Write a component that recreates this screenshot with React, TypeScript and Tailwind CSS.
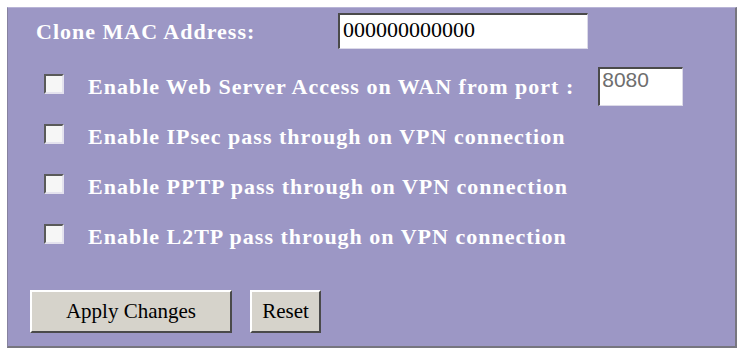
import React from "react";

const serif = "font-['Liberation_Serif',_'Times_New_Roman',_serif]";

function Check() {
  return (
    <span className="box-border inline-block h-[20px] w-[20px] shrink-0 border-t-2 border-l-2 border-r-2 border-b-2 border-t-[#5a5a5a] border-l-[#5a5a5a] border-r-[#e4e2ee] border-b-[#e4e2ee] bg-[#f6f6f6]" />
  );
}

function OptionRow({ label, children }: { label: string; children?: React.ReactNode }) {
  return (
    <div className="flex h-[50px] items-center">
      <div className="ml-[36px] pt-[2px]">
        <Check />
      </div>
      <span className="ml-[24px] text-[22px] font-bold tracking-[1px] text-white">{label}</span>
      {children}
    </div>
  );
}

export default function App() {
  return (
    <div className={`h-[351px] w-[743px] bg-white pl-[7px] pt-[7px] ${serif}`}>
      <div className="box-border h-[341px] w-[730px] border-t border-l border-r-2 border-b-2 border-t-[#b8b4d6] border-l-[#86829f] border-r-[#77767f] border-b-[#77767f] bg-[#9c97c5]">
        <div className="mt-[5px] flex h-[36px] items-center">
          <span className="ml-[28px] w-[302px] text-[22px] font-bold tracking-[1px] text-white">
            Clone MAC Address:
          </span>
          <div className="box-border h-[36px] w-[250px] border-t-2 border-l-2 border-r border-b border-t-[#4a4a4a] border-l-[#4a4a4a] border-r-[#dcdae8] border-b-[#dcdae8] bg-white pl-[3px] pt-[1px] text-[22px] leading-[28px] text-black">
            000000000000
          </div>
        </div>

        <div className="mt-[12px]">
          <OptionRow label="Enable Web Server Access on WAN from port :">
            <div className="ml-[24px] box-border h-[39px] w-[85px] border-t-2 border-l-2 border-r border-b border-t-[#4a4a4a] border-l-[#4a4a4a] border-r-[#dcdae8] border-b-[#dcdae8] bg-white pl-[2px] font-['Liberation_Sans',_Arial,_sans-serif] text-[21px] leading-[22px] text-[#6e6e6e]">
              8080
            </div>
          </OptionRow>
          <OptionRow label="Enable IPsec pass through on VPN connection" />
          <OptionRow label="Enable PPTP pass through on VPN connection" />
          <OptionRow label="Enable L2TP pass through on VPN connection" />
        </div>

        <div className="ml-[22px] mt-[29px] flex gap-[18px]">
          <button className="box-border h-[43px] w-[202px] border-t-2 border-l-2 border-r-2 border-b-2 border-t-white border-l-white border-r-[#4a4a4a] border-b-[#4a4a4a] bg-[#d6d3cb] text-[21px] text-black">
            Apply Changes
          </button>
          <button className="box-border h-[43px] w-[71px] border-t-2 border-l-2 border-r-2 border-b-2 border-t-white border-l-white border-r-[#4a4a4a] border-b-[#4a4a4a] bg-[#d6d3cb] text-[21px] text-black">
            Reset
          </button>
        </div>
      </div>
    </div>
  );
}
